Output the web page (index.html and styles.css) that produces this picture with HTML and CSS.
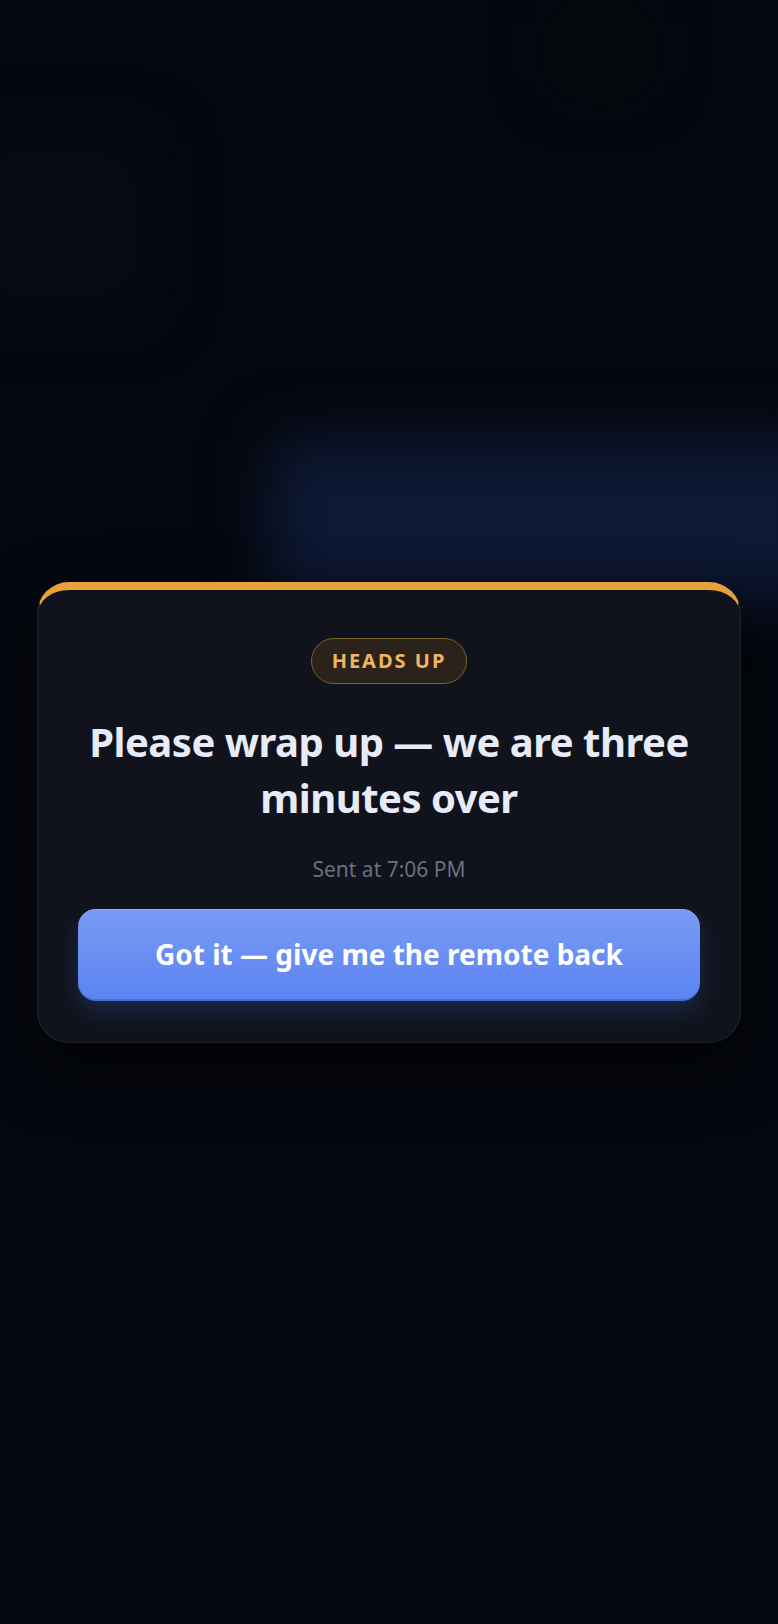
FILE: index.html
```html
<!DOCTYPE html>
<html lang="en">
<head>
<meta charset="utf-8">
<title>Heads up</title>
<link rel="stylesheet" href="styles.css">
</head>
<body>
<div class="backdrop">
  <div class="glow glow-blue"></div>
  <div class="glow glow-left"></div>
  <div class="glow glow-top"></div>
</div>
<main class="stage">
  <section class="card">
    <span class="badge">HEADS UP</span>
    <h1 class="title">Please wrap up — we are three minutes over</h1>
    <p class="meta">Sent at 7:06 PM</p>
    <button class="action" type="button">Got it — give me the remote back</button>
  </section>
</main>
</body>
</html>
```

FILE: styles.css
```css
* { box-sizing: border-box; }
html, body {
  margin: 0;
  padding: 0;
  height: 100%;
}
body {
  background: #04070e;
  font-family: "Noto Sans", "Open Sans", sans-serif;
  color: #e6ebf7;
  overflow: hidden;
  position: relative;
}
.backdrop {
  position: absolute;
  inset: 0;
  overflow: hidden;
}
.glow {
  position: absolute;
  filter: blur(30px);
}
.glow-blue {
  left: 270px;
  top: 440px;
  width: 560px;
  height: 160px;
  background: #0e1935;
}
.glow-left {
  left: -40px;
  top: 140px;
  width: 190px;
  height: 170px;
  background: #080b15;
}
.glow-top {
  left: 560px;
  top: 20px;
  width: 80px;
  height: 60px;
  background: #070a0d;
}
.stage {
  position: relative;
  min-height: 100%;
  display: flex;
  align-items: center;
  justify-content: center;
  padding: 0 37px;
}
.card {
  width: 100%;
  background: #10131b;
  border: 1px solid rgba(255, 255, 255, 0.07);
  border-top: 8px solid #e8a23c;
  border-radius: 32px;
  padding: 48px 40px 41px;
  display: flex;
  flex-direction: column;
  align-items: center;
  box-shadow: 0 24px 60px rgba(0, 0, 0, 0.55);
}
.badge {
  display: inline-flex;
  align-items: center;
  justify-content: center;
  height: 46px;
  width: 156px;
  border-radius: 23px;
  background: #2a221b;
  border: 1.5px solid #80602f;
  color: #efb560;
  font-weight: 700;
  font-size: 20px;
  letter-spacing: 2px;
}
.title {
  margin: 30px 0 0;
  font-size: 40px;
  line-height: 56px;
  font-weight: 700;
  text-align: center;
  color: #e7ebf7;
  letter-spacing: -0.5px;
}
.meta {
  margin: 29px 0 0;
  font-size: 21px;
  line-height: 28px;
  color: #6a707d;
}
.action {
  margin-top: 26px;
  width: 100%;
  height: 92px;
  border: none;
  border-radius: 18px;
  background: linear-gradient(180deg, #7a9bf5 0%, #5b84f1 100%);
  border-bottom: 2px solid #4a6cd6;
  color: #ffffff;
  font-family: inherit;
  font-weight: 700;
  font-size: 28px;
  box-shadow: 0 10px 24px rgba(79, 120, 240, 0.22), inset 0 1px 0 rgba(255, 255, 255, 0.18);
}
```
